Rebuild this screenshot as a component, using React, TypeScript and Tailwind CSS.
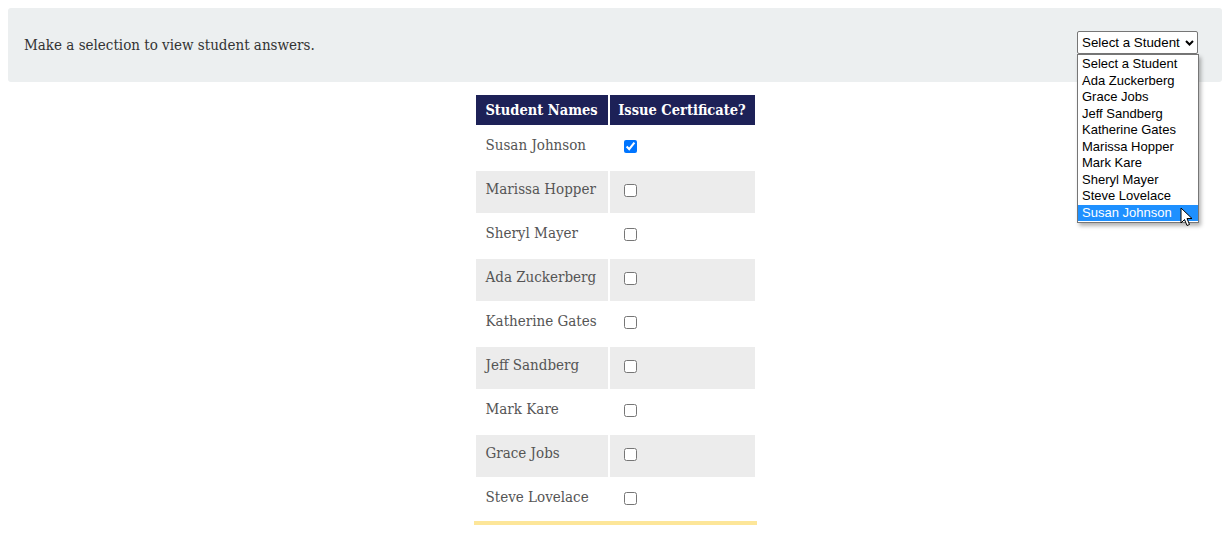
import { useState } from "react";

const students = [
  "Susan Johnson",
  "Marissa Hopper",
  "Sheryl Mayer",
  "Ada Zuckerberg",
  "Katherine Gates",
  "Jeff Sandberg",
  "Mark Kare",
  "Grace Jobs",
  "Steve Lovelace",
];

const options = [
  "Select a Student",
  "Ada Zuckerberg",
  "Grace Jobs",
  "Jeff Sandberg",
  "Katherine Gates",
  "Marissa Hopper",
  "Mark Kare",
  "Sheryl Mayer",
  "Steve Lovelace",
  "Susan Johnson",
];

function Cursor() {
  return (
    <svg width="14" height="20" viewBox="0 0 14 20" className="absolute left-[103px] top-[176px] z-20">
      <path d="M1 1 L1 16 L4.5 12.5 L7 18.5 L9.5 17.5 L7 11.5 L12 11.5 Z" fill="#fff" stroke="#000" strokeWidth="1" strokeLinejoin="round" />
    </svg>
  );
}

export default function App() {
  const [checked, setChecked] = useState<Record<string, boolean>>({ "Susan Johnson": true });

  return (
    <div className="min-h-[534px] bg-white p-2 font-['DejaVu_Serif',serif] [font-stretch:condensed]">
      <div className="flex h-[74px] items-start justify-between rounded-[3px] bg-[#eceff0] pl-4 pr-6">
        <p className="mt-[26px] text-[15px] text-[#333]">Make a selection to view student answers.</p>
        <div className="relative mt-[23px] [font-stretch:normal]">
          <div className="flex h-[23px] w-[121px] items-center justify-between rounded-[2px] border border-[#767676] bg-white pl-[4px] pr-[3px] font-['Liberation_Sans',sans-serif] text-[13.33px] text-black">
            <span className="pt-px">Select a Student</span>
            <svg width="9" height="6" viewBox="0 0 9 6">
              <path d="M1 1 L4.5 4.5 L8 1" fill="none" stroke="#000" strokeWidth="2" />
            </svg>
          </div>
          <ul className="absolute left-0 top-[23px] z-10 w-[122px] border border-[#767676] bg-white py-px font-['Liberation_Sans',sans-serif] text-[13px] leading-[16.5px] text-black shadow-[2px_3px_4px_rgba(0,0,0,0.3)]">
            {options.map((o) => (
              <li
                key={o}
                className={
                  o === "Susan Johnson" ? "bg-[#1e90ff] px-1 text-white" : "px-1"
                }
              >
                {o}
              </li>
            ))}
          </ul>
          <Cursor />
        </div>
      </div>

      <div className="mt-[11px] flex justify-center">
        <div className="border-b-4 border-[#fde699]">
          <table className="-mb-[2px] table-fixed border-separate border-spacing-[2px] text-[15px]">
            <colgroup>
              <col className="w-[132px]" />
              <col className="w-[145px]" />
            </colgroup>
            <thead>
              <tr className="h-[30px] bg-[#1d2157] text-white">
                <th className="whitespace-nowrap px-[4px] text-center text-[14.5px] font-bold">Student Names</th>
                <th className="whitespace-nowrap px-[4px] text-center text-[14.5px] font-bold">Issue Certificate?</th>
              </tr>
            </thead>
            <tbody>
              {students.map((s, i) => (
                <tr key={s} className={i % 2 === 1 ? "h-[42px] bg-[#ececec]" : "h-[42px] bg-white"}>
                  <td className="whitespace-nowrap px-[10px] pb-[5px] align-middle text-[#555]">{s}</td>
                  <td className="pb-[4px] pl-[14px] align-middle">
                    <input
                      type="checkbox"
                      className="m-0 block h-[13px] w-[13px] accent-[#0075ff]"
                      checked={!!checked[s]}
                      onChange={() => setChecked({ ...checked, [s]: !checked[s] })}
                    />
                  </td>
                </tr>
              ))}
            </tbody>
          </table>
        </div>
      </div>
    </div>
  );
}
